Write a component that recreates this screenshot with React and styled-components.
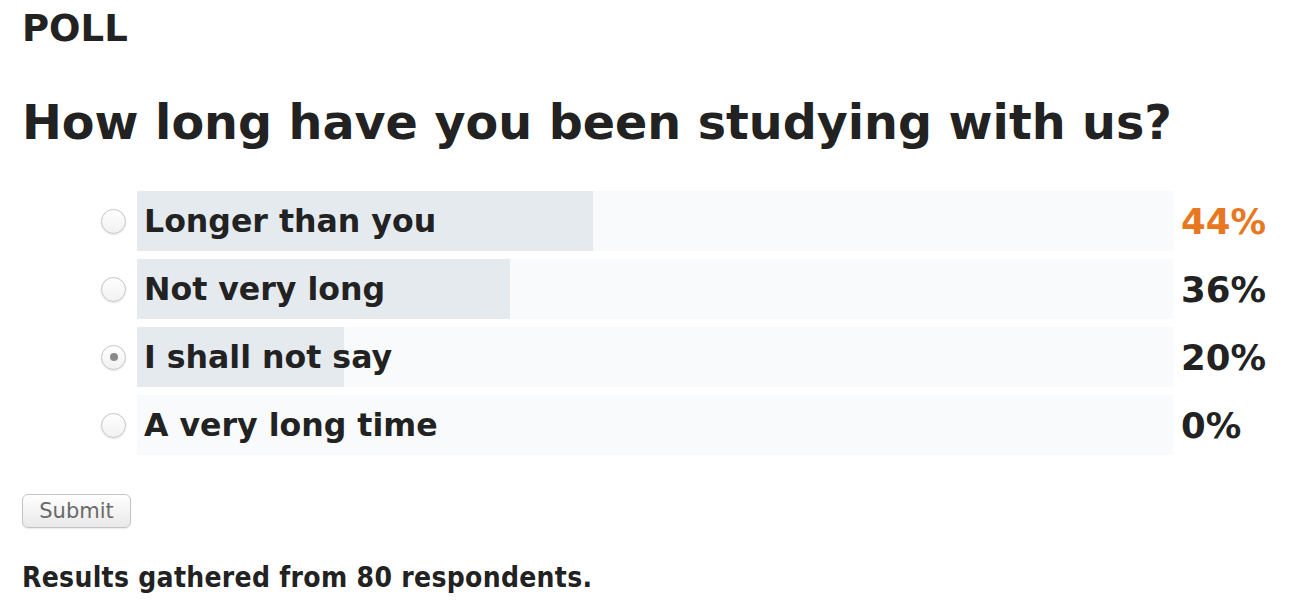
import styled, { createGlobalStyle } from "styled-components";

const GlobalStyle = createGlobalStyle`
  html, body {
    margin: 0;
    padding: 0;
    background: #ffffff;
  }
  body {
    font-family: "DejaVu Sans", Verdana, sans-serif;
    color: #222222;
  }
`;

const Poll = styled.div`
  padding: 0 22px;
`;

const Kicker = styled.h3`
  margin: 0;
  padding-top: 6px;
  font-size: 37px;
  line-height: 46px;
  font-weight: bold;
`;

const Question = styled.h2`
  margin: 40px 0 0;
  font-size: 47.6px;
  line-height: 62px;
  font-weight: bold;
`;

const Options = styled.ul`
  list-style: none;
  margin: 37px 0 0;
  padding: 0 0 0 79px;
  display: flex;
  flex-direction: column;
  gap: 8px;
`;

const Option = styled.li`
  display: flex;
  align-items: center;
`;

const Radio = styled.span`
  flex: none;
  box-sizing: border-box;
  width: 25px;
  height: 25px;
  margin-right: 11px;
  border-radius: 50%;
  border: 1px solid #c6c6c6;
  background: linear-gradient(#ffffff, #f1f1f1);
  box-shadow: 0 1px 2px rgba(0, 0, 0, 0.1);
  display: flex;
  align-items: center;
  justify-content: center;

  &::after {
    content: "";
    width: 8px;
    height: 8px;
    border-radius: 50%;
    background: ${(p) => (p.$checked ? "#8a8a8a" : "transparent")};
  }
`;

const Track = styled.div`
  position: relative;
  flex: 1;
  height: 60px;
  background: #f8fafc;
  display: flex;
  align-items: center;
`;

const Fill = styled.div`
  position: absolute;
  left: 0;
  top: 0;
  bottom: 0;
  background: #e5eaef;
`;

const Label = styled.span`
  position: relative;
  padding-left: 7px;
  font-size: 31.6px;
  font-weight: bold;
  white-space: nowrap;
`;

const Percent = styled.span`
  flex: none;
  width: 95px;
  margin-left: 8px;
  font-size: 35.5px;
  font-weight: bold;
  color: ${(p) => (p.$top ? "#e87722" : "#222222")};
`;

const SubmitButton = styled.button`
  display: block;
  margin-top: 39px;
  width: 109px;
  height: 34px;
  padding: 0;
  border: 1px solid #c4c4c4;
  border-radius: 6px;
  background: linear-gradient(#ffffff, #f3f3f3 55%, #e9e9e9);
  box-shadow: 0 1px 1px rgba(0, 0, 0, 0.08);
  font-family: "DejaVu Sans", Verdana, sans-serif;
  font-size: 21px;
  color: #6a6a6a;
`;

const Results = styled.p`
  margin: 33px 0 0;
  font-family: "DejaVu Sans Condensed", "DejaVu Sans", sans-serif;
  font-size: 28px;
  line-height: 34px;
  letter-spacing: 0.3px;
  font-weight: bold;
`;

const answers = [
  { label: "Longer than you", pct: 44 },
  { label: "Not very long", pct: 36 },
  { label: "I shall not say", pct: 20, checked: true },
  { label: "A very long time", pct: 0 },
];

export default function App() {
  const top = Math.max(...answers.map((a) => a.pct));
  return (
    <>
      <GlobalStyle />
      <Poll>
        <Kicker>POLL</Kicker>
        <Question>How long have you been studying with us?</Question>
        <Options>
          {answers.map((a) => (
            <Option key={a.label}>
              <Radio $checked={a.checked} />
              <Track>
                <Fill style={{ width: `${a.pct}%` }} />
                <Label>{a.label}</Label>
              </Track>
              <Percent $top={a.pct === top}>{a.pct}%</Percent>
            </Option>
          ))}
        </Options>
        <SubmitButton type="button">Submit</SubmitButton>
        <Results>Results gathered from 80 respondents.</Results>
      </Poll>
    </>
  );
}
